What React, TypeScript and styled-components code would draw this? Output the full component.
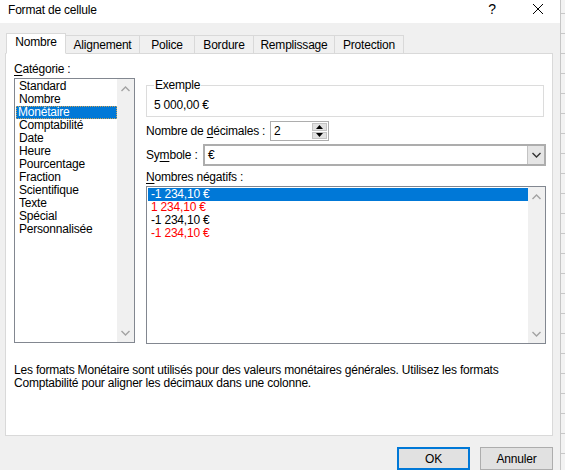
import React from 'react';
import styled, {createGlobalStyle} from 'styled-components';

const GlobalStyle = createGlobalStyle`
  html, body {
    margin: 0;
    padding: 0;
    background: #f0f0f0;
  }

  body {
    color: #000;
    font-family: "Liberation Sans", Arial, sans-serif;
    font-size: 12px;
    letter-spacing: -0.2px;
  }
`;

const Page = styled.div`
  display: flex;
  height: 470px;
  overflow: hidden;
  width: 565px;
`;

const Dialog = styled.div`
  background: #f0f0f0;
  display: flex;
  flex-direction: column;
  height: 470px;
  width: 560px;
`;

const SheetEdge = styled.div`
  background-color: #f3f3f3;
  background-image: repeating-linear-gradient(to bottom, transparent 0, transparent 13px, #c8c8c8 13px, #c8c8c8 14px, transparent 14px, transparent 20px);
  border-left: 1px solid #c6c6c6;
  flex: 1;
`;

const TitleBar = styled.div`
  align-items: center;
  background: #fff;
  display: flex;
  height: 23px;
`;

const Title = styled.div`
  flex: 1;
  font-size: 12px;
  line-height: 18px;
  padding-left: 8px;
  padding-bottom: 3px;
`;

const CaptionButton = styled.div`
  align-items: center;
  box-sizing: border-box;
  display: flex;
  font-size: 14px;
  height: 23px;
  justify-content: center;
  padding: 0 0 5px 2px;
  width: 46px;
`;

const Body = styled.div`
  display: flex;
  flex: 1;
  flex-direction: column;
  padding: 10px 7px 0 5px;
`;

const TabRow = styled.div`
  align-items: flex-end;
  display: flex;
  height: 20px;
  padding-left: 1px;
  position: relative;
  z-index: 1;
`;

const Tab = styled.div<{$active?: boolean; $width: number}>`
  align-items: center;
  background: ${p => (p.$active ? '#fff' : '#f0f0f0')};
  border: 1px solid #d9d9d9;
  border-bottom: ${p => (p.$active ? '1px solid #fff' : 'none')};
  box-sizing: border-box;
  display: flex;
  height: ${p => (p.$active ? 21 : 18)}px;
  justify-content: center;
  margin-bottom: ${p => (p.$active ? -1 : 0)}px;
  margin-left: ${p => (p.$active ? 0 : -1)}px;
  padding-bottom: ${p => (p.$active ? 3 : 0)}px;
  width: ${p => p.$width}px;
`;

const Panel = styled.div`
  background: #fff;
  border: 1px solid #d9d9d9;
  box-sizing: border-box;
  display: flex;
  flex-direction: column;
  height: 383px;
  padding: 8px 0 0 8px;
  width: 548px;
`;

const MainRow = styled.div`
  display: flex;
  gap: 11px;
`;

const LeftColumn = styled.div`
  display: flex;
  flex-direction: column;
  width: 121px;
`;

const RightColumn = styled.div`
  display: flex;
  flex-direction: column;
  margin-top: 16px;
  width: 400px;
`;

const Label = styled.div<{$width?: number}>`
  flex: none;
  line-height: 14px;
  width: ${p => (p.$width ? `${p.$width}px` : 'auto')};
`;

const Key = styled.span`
  text-decoration: underline;
  text-underline-offset: 2px;
`;

const ListBox = styled.div<{$height: number}>`
  border: 1px solid #828790;
  box-sizing: border-box;
  display: flex;
  height: ${p => p.$height}px;
  margin-top: 2px;
`;

const ListItems = styled.div`
  display: flex;
  flex: 1;
  flex-direction: column;
  padding: 1px 0 0 1px;
`;

const ListItem = styled.div<{$selected?: boolean; $colour?: string; $focus?: boolean}>`
  background: ${p => (p.$selected ? '#0078d7' : 'transparent')};
  box-sizing: border-box;
  color: ${p => (p.$selected ? '#fff' : p.$colour || '#000')};
  height: 13px;
  line-height: 13px;
  outline: ${p => (p.$focus ? '1px dotted #c9a25a' : 'none')};
  outline-offset: -1px;
  padding-left: ${p => (p.$focus ? 2 : 3)}px;
  white-space: nowrap;
`;

const ScrollTrack = styled.div`
  align-items: center;
  background: #f0f0f0;
  display: flex;
  flex-direction: column;
  justify-content: space-between;
  padding: 7px 0 6px;
  width: 17px;
`;

const GroupBox = styled.fieldset`
  border: 1px solid #dcdcdc;
  box-sizing: border-box;
  height: 39px;
  margin: 0;
  padding: 6px 7px 0;
  width: 398px;

  legend {
    line-height: 14px;
    padding: 0 1px;
  }
`;

const FieldRow = styled.div<{$gap: number}>`
  align-items: center;
  display: flex;
  margin-top: ${p => p.$gap}px;
`;

const SpinBox = styled.div`
  align-items: center;
  border: 1px solid #adadad;
  box-sizing: border-box;
  display: flex;
  height: 20px;
  justify-content: space-between;
  padding: 1px 1px 1px 3px;
  width: 59px;
`;

const SpinButtons = styled.div`
  display: flex;
  flex-direction: column;
  gap: 1px;
  height: 16px;
  width: 15px;
`;

const SpinButton = styled.div`
  align-items: center;
  background: #e1e1e1;
  border: 1px solid #c3c3c3;
  box-sizing: border-box;
  display: flex;
  flex: 1;
  justify-content: center;
`;

const ComboBox = styled.div`
  align-items: center;
  border: 2px solid #adadad;
  box-sizing: border-box;
  display: flex;
  flex: 1;
  height: 22px;
  justify-content: space-between;
  padding-left: 3px;
`;

const ComboButton = styled.div`
  align-items: center;
  align-self: stretch;
  background: #e5e5e5;
  border-left: 1px solid #c3c3c3;
  display: flex;
  justify-content: center;
  width: 16px;
`;

const Description = styled.div`
  line-height: 13px;
  margin-top: 20px;
`;

const Footer = styled.div`
  display: flex;
  gap: 10px;
  justify-content: flex-end;
  padding: 11px 0 0;
  width: 548px;
`;

const Button = styled.div<{$default?: boolean}>`
  align-items: center;
  background: #e1e1e1;
  border: ${p => (p.$default ? '2px solid #0078d7' : '1px solid #adadad')};
  box-sizing: border-box;
  display: flex;
  height: 23px;
  justify-content: center;
  width: 73px;
`;

const tabs = [
  {label: 'Nombre', width: 60},
  {label: 'Alignement', width: 75},
  {label: 'Police', width: 56},
  {label: 'Bordure', width: 60},
  {label: 'Remplissage', width: 82},
  {label: 'Protection', width: 70},
];

const categories = [
  'Standard', 'Nombre', 'Monétaire', 'Comptabilité', 'Date', 'Heure',
  'Pourcentage', 'Fraction', 'Scientifique', 'Texte', 'Spécial', 'Personnalisée',
];

const negatives = [
  {text: '-1 234,10 €', colour: '#000'},
  {text: '1 234,10 €', colour: '#ff0000'},
  {text: '-1 234,10 €', colour: '#000'},
  {text: '-1 234,10 €', colour: '#ff0000'},
];

function Chevron ({up, colour = '#a3a3a3'}: {up?: boolean; colour?: string}) {
  return (
    <svg width="9" height="6" viewBox="0 0 9 6">
      <path d={up ? 'M0.5 5 L4.5 1 L8.5 5' : 'M0.5 1 L4.5 5 L8.5 1'} fill="none" stroke={colour} strokeWidth="1.4" />
    </svg>
  );
}

function Triangle ({up}: {up?: boolean}) {
  return (
    <svg width="7" height="4" viewBox="0 0 7 4">
      <path d={up ? 'M0 4 L3.5 0 L7 4 Z' : 'M0 0 L3.5 4 L7 0 Z'} fill="#000" />
    </svg>
  );
}

function Scrollbar () {
  return (
    <ScrollTrack>
      <Chevron up />
      <Chevron />
    </ScrollTrack>
  );
}

export default function App () {
  return (
    <Page>
      <GlobalStyle />
      <Dialog>
        <TitleBar>
          <Title>Format de cellule</Title>
          <CaptionButton>?</CaptionButton>
          <CaptionButton>
            <svg width="12" height="12" viewBox="0 0 12 12">
              <path d="M1 1 L11 11 M11 1 L1 11" stroke="#000" strokeWidth="1" />
            </svg>
          </CaptionButton>
        </TitleBar>

        <Body>
          <TabRow>
            {tabs.map((tab, i) => (
              <Tab key={tab.label} $active={i === 0} $width={tab.width}>{tab.label}</Tab>
            ))}
          </TabRow>

          <Panel>
            <MainRow>
              <LeftColumn>
                <Label><Key>C</Key>atégorie :</Label>
                <ListBox $height={265}>
                  <ListItems>
                    {categories.map(name => (
                      <ListItem key={name} $selected={name === 'Monétaire'} $focus={name === 'Monétaire'}>{name}</ListItem>
                    ))}
                  </ListItems>
                  <Scrollbar />
                </ListBox>
              </LeftColumn>

              <RightColumn>
                <GroupBox>
                  <legend>Exemple</legend>
                  <Label>5 000,00 €</Label>
                </GroupBox>

                <FieldRow $gap={4}>
                  <Label $width={124}>Nombre de <Key>d</Key>écimales :</Label>
                  <SpinBox>
                    <span>2</span>
                    <SpinButtons>
                      <SpinButton><Triangle up /></SpinButton>
                      <SpinButton><Triangle /></SpinButton>
                    </SpinButtons>
                  </SpinBox>
                </FieldRow>

                <FieldRow $gap={3}>
                  <Label $width={57}>Sy<Key>m</Key>bole :</Label>
                  <ComboBox>
                    <span>€</span>
                    <ComboButton><Chevron colour="#333" /></ComboButton>
                  </ComboBox>
                </FieldRow>

                <FieldRow $gap={4}>
                  <Label><Key>N</Key>ombres négatifs :</Label>
                </FieldRow>

                <ListBox $height={158}>
                  <ListItems>
                    {negatives.map((item, i) => (
                      <ListItem key={i} $selected={i === 0} $colour={item.colour}>{item.text}</ListItem>
                    ))}
                  </ListItems>
                  <Scrollbar />
                </ListBox>
              </RightColumn>
            </MainRow>

            <Description>
              Les formats Monétaire sont utilisés pour des valeurs monétaires générales. Utilisez les formats<br />
              Comptabilité pour aligner les décimaux dans une colonne.
            </Description>
          </Panel>

          <Footer>
            <Button $default>OK</Button>
            <Button>Annuler</Button>
          </Footer>
        </Body>
      </Dialog>
      <SheetEdge />
    </Page>
  );
}
